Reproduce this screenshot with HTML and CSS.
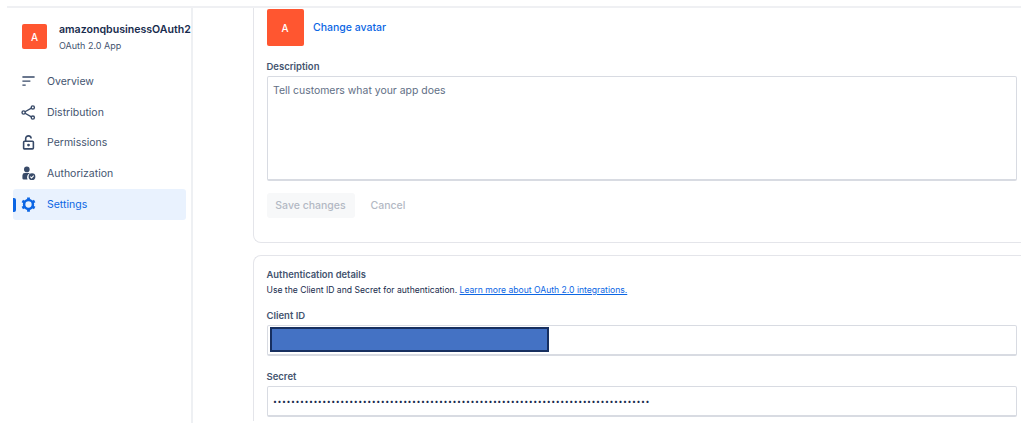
FILE: index.html
```html
<!DOCTYPE html>
<html lang="en">
<head>
<meta charset="utf-8">
<title>amazonqbusinessOAuth2 settings</title>
<link rel="stylesheet" href="styles.css">
</head>
<body>
<div class="frame">
  <aside class="sidebar">
    <div class="app-head">
      <div class="avatar avatar-small">A</div>
      <div class="app-meta">
        <div class="app-name">amazonqbusinessOAuth2</div>
        <div class="app-type">OAuth 2.0 App</div>
      </div>
    </div>
    <nav class="nav">
      <a class="nav-item">
        <svg class="nav-icon" viewBox="0 0 16 16"><path d="M1.500 3.200h13M1.500 7.500h8.500M1.500 11.800h3.500" fill="none" stroke="currentColor" stroke-width="1.400"/></svg>
        <span>Overview</span>
      </a>
      <a class="nav-item">
        <svg class="nav-icon" viewBox="0 0 16 16"><g fill="none" stroke="currentColor" stroke-width="1.500"><circle cx="2.800" cy="8" r="1.700"/><circle cx="12.600" cy="2.600" r="1.700"/><circle cx="12.600" cy="13.400" r="1.700"/><path d="M4.300 7.200l6.800-3.800M4.300 8.800l6.800 3.800"/></g></svg>
        <span>Distribution</span>
      </a>
      <a class="nav-item">
        <svg class="nav-icon" viewBox="0 0 16 16"><g fill="none" stroke="currentColor" stroke-width="1.700"><rect x="2.800" y="6.600" width="10.400" height="8.200" rx="1"/><path d="M5 6.400V3.800a2.900 2.900 0 0 1 5.800 0"/></g><circle cx="8" cy="10.700" r="1.500" fill="currentColor"/></svg>
        <span>Permissions</span>
      </a>
      <a class="nav-item">
        <svg class="nav-icon" viewBox="0 0 16 16"><circle cx="6.200" cy="3.600" r="3" fill="currentColor"/><path d="M1.500 10a2.600 2.600 0 0 1 2.600-2.600h4.400a3 3 0 0 1 1 .2A5 5 0 0 0 7 14.500H3a1.500 1.500 0 0 1-1.500-1.500z" fill="currentColor"/><circle cx="11.700" cy="11.400" r="3.600" fill="currentColor"/><path d="M9.900 11.400l1.400 1.300 2.300-2.400" fill="none" stroke="#fff" stroke-width="1.100"/></svg>
        <span>Authorization</span>
      </a>
      <a class="nav-item nav-item-active">
        <svg class="nav-icon" viewBox="0 0 16 16"><g fill="none" stroke="currentColor"><circle cx="8" cy="8" r="4.700" stroke-width="2.700"/><path d="M8 .4v3M8 12.600v3M1.400 4.200l2.600 1.500M12 10.300l2.600 1.500M1.400 11.800L4 10.300M12 5.700l2.600-1.500" stroke-width="3"/></g></svg>
        <span>Settings</span>
      </a>
    </nav>
  </aside>
  <main class="content">
    <section class="card card-first">
      <div class="avatar-row">
        <div class="avatar avatar-large">A</div>
        <a class="link-strong">Change avatar</a>
      </div>
      <label class="field-label label-description">Description</label>
      <div class="textarea">Tell customers what your app does</div>
      <div class="actions">
        <span class="btn-disabled">Save changes</span>
        <span class="btn-cancel">Cancel</span>
      </div>
    </section>
    <section class="card card-second">
      <h2 class="card-title">Authentication details</h2>
      <p class="card-desc">Use the Client ID and Secret for authentication. <a class="link-inline">Learn more about OAuth 2.0 integrations.</a></p>
      <label class="field-label label-client">Client ID</label>
      <div class="input"><div class="redaction"></div></div>
      <label class="field-label label-secret">Secret</label>
      <div class="input input-secret">••••••••••••••••••••••••••••••••••••••••••••••••••••••••••••••••••••••••••••••••••••</div>
    </section>
  </main>
</div>
</body>
</html>
```

FILE: styles.css
```css
* { box-sizing: border-box; }

html, body {
  margin: 0;
  height: 100%;
  overflow: hidden;
  background: #fff;
}

body {
  font-family: Inter, "Noto Sans", sans-serif;
  color: #44546f;
}

.frame {
  width: 1014px;
  height: 417px;
  margin: 6px 0 0 7px;
  border-top: 2px solid #eff0f3;
  display: flex;
}

.sidebar {
  width: 186px;
  flex: none;
  border-right: 2px solid #eef0f3;
  padding: 16px 0 0 6px;
}

.app-head {
  display: flex;
  align-items: flex-start;
  gap: 12px;
  padding-left: 9px;
  height: 42px;
}

.avatar {
  background: #ff5630;
  color: #fff;
  display: flex;
  align-items: center;
  justify-content: center;
  border-radius: 2px;
  flex: none;
}

.avatar-small {
  width: 25px;
  height: 25px;
  font-size: 10px;
  font-weight: 500;
}

.avatar-large {
  width: 37px;
  height: 37px;
  font-size: 10px;
  font-weight: 500;
}

.app-meta {
  min-width: 0;
  width: 132px;
}

.app-name {
  font-size: 10.600px;
  line-height: 13px;
  font-weight: 600;
  color: #172b4d;
  white-space: nowrap;
  margin-top: -1px;
}

.app-type {
  font-size: 9px;
  line-height: 12px;
  margin-top: 4px;
}

.nav {
  display: flex;
  flex-direction: column;
}

.nav-item {
  height: 30.800px;
  display: flex;
  align-items: center;
  gap: 11px;
  width: 173px;
  padding-left: 9px;
  font-size: 10.500px;
  color: #44546f;
  border-radius: 3px;
  position: relative;
}

.nav-icon {
  width: 15px;
  height: 15px;
  margin-left: -1px;
  color: #384a68;
  flex: none;
}

.nav-item-active {
  background: #e9f2fe;
  color: #0c66e4;
}

.nav-item-active .nav-icon {
  color: #0c66e4;
}

.nav-item-active::before {
  content: "";
  position: absolute;
  left: 0;
  top: 9px;
  width: 3px;
  height: 14px;
  background: #0c66e4;
  border-radius: 0 2px 2px 0;
}

.content {
  flex: 1;
  min-width: 0;
  padding-left: 60px;
}

.card {
  border: 1px solid #e4e5ea;
  border-right: 0;
  padding-left: 12.500px;
  padding-right: 4px;
}

.card-first {
  height: 235px;
  border-top: 0;
  border-radius: 0 0 0 8px;
  padding-top: 1px;
}

.card-second {
  height: 166px;
  margin-top: 12px;
  border-bottom: 0;
  border-radius: 8px 0 0 0;
  padding-top: 13px;
}

.avatar-row {
  display: flex;
  align-items: center;
  gap: 9.500px;
}

.link-strong {
  font-size: 10.500px;
  font-weight: 500;
  color: #0c66e4;
  margin-top: -1px;
}

.field-label {
  display: block;
  font-size: 9.500px;
  line-height: 12px;
  font-weight: 600;
  color: #44546f;
}

.label-description { margin-top: 15px; }
.label-client { margin-top: 14px; }
.label-secret { margin-top: 15px; }

.textarea {
  height: 105px;
  margin-top: 3px;
  border: 1px solid #d8dbe2;
  border-bottom-width: 2px;
  border-radius: 2px;
  padding: 7px 5.500px;
  font-size: 10.450px;
  line-height: 14px;
  color: #626f86;
}

.actions {
  display: flex;
  align-items: center;
  gap: 16px;
  margin-top: 12px;
}

.btn-disabled {
  width: 88px;
  height: 25px;
  display: flex;
  align-items: center;
  justify-content: center;
  background: #f7f8f9;
  border-radius: 3px;
  font-size: 10.500px;
  font-weight: 500;
  color: #b3b9c4;
}

.btn-cancel {
  font-size: 10.500px;
  font-weight: 500;
  color: #b3b9c4;
}

.card-title {
  margin: 0;
  font-size: 9.400px;
  line-height: 12px;
  font-weight: 600;
  color: #44546f;
}

.card-desc {
  margin: 3px 0 0;
  font-size: 8.600px;
  line-height: 12px;
  color: #172b4d;
}

.link-inline {
  color: #0c66e4;
  text-decoration: underline;
}

.input {
  height: 31px;
  margin-top: 3px;
  border: 1px solid #d8dbe2;
  border-bottom-width: 2px;
  border-radius: 2px;
  padding: 1px 2px;
}

.redaction {
  width: 279px;
  height: 25px;
  background: #4472c4;
  border: 2px solid #172f5f;
}

.input-secret {
  padding: 0 5.500px;
  font-size: 7px;
  line-height: 29px;
  letter-spacing: 0.55px;
  color: #172b4d;
  white-space: nowrap;
  overflow: hidden;
}
```
